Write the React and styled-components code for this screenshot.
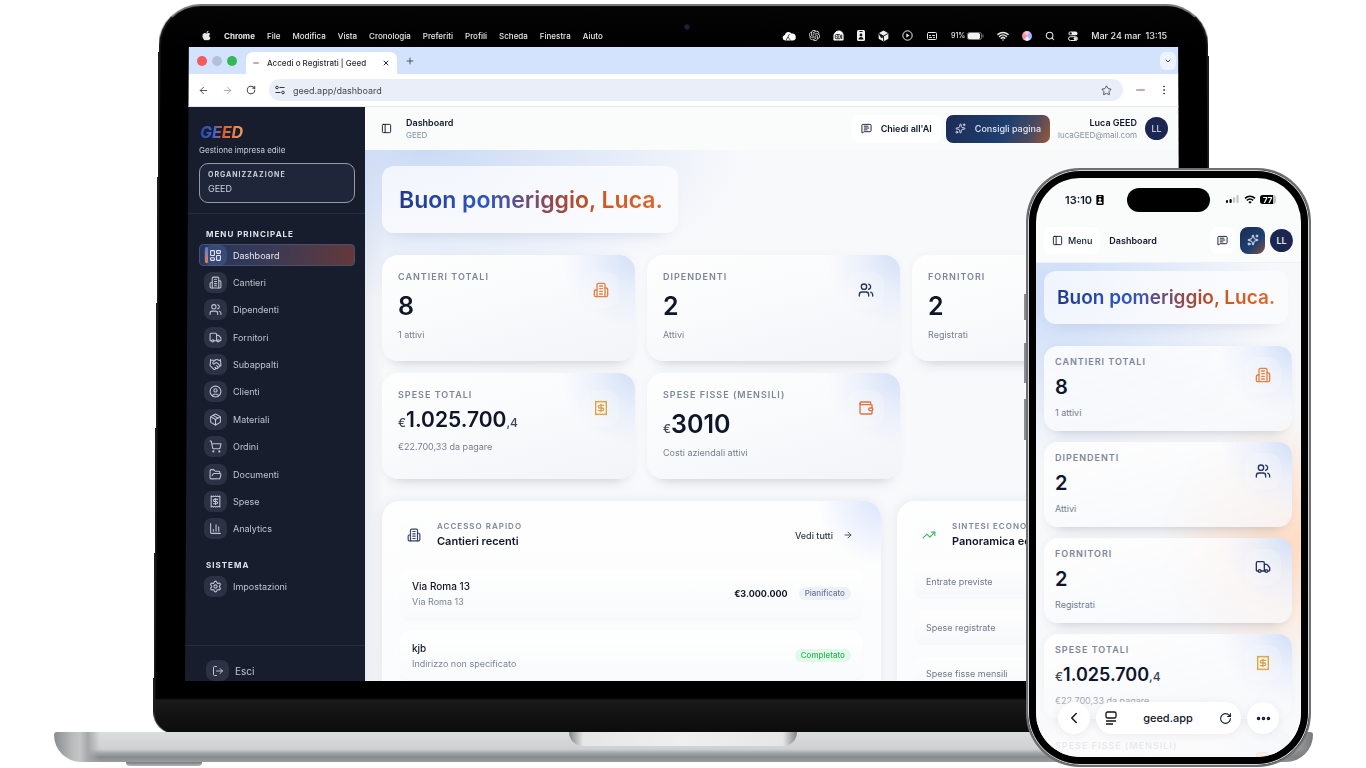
import styled, { createGlobalStyle, css } from "styled-components";
import {
  ArrowLeft,
  ArrowRight,
  Captions,
  ChartColumn,
  ChevronDown,
  ChevronLeft,
  CircleUser,
  Ellipsis,
  EllipsisVertical,
  FolderOpen,
  Handshake,
  LayoutDashboard,
  LogOut,
  MessageSquareText,
  Package,
  PanelLeft,
  Plus,
  Receipt,
  RotateCw,
  Search,
  Settings,
  ShoppingCart,
  Sparkles,
  Star,
  TrendingUp,
  Truck,
  Users,
  Wallet,
  Wifi,
  X,
} from "lucide-react";
import { FaApple } from "react-icons/fa";
import { SiOpenai } from "react-icons/si";

const GlobalStyle = createGlobalStyle`
  * {
    box-sizing: border-box;
  }
  body {
    margin: 0;
    background: #fff;
    font-family: Inter, "Liberation Sans", sans-serif;
    color: #10162a;
  }
  button, input {
    font: inherit;
    color: inherit;
    border: 0;
    padding: 0;
    background: none;
  }
  a {
    color: inherit;
    text-decoration: none;
  }
  h1, h2, p, ul {
    margin: 0;
    padding: 0;
  }
  ul {
    list-style: none;
  }
  svg {
    display: block;
    flex-shrink: 0;
  }
`;

const Stage = styled.div`
  position: relative;
  display: flex;
  flex-direction: column;
  height: 100vh;
  min-height: 600px;
  padding: 4px 53px 0 54px;
  overflow: hidden;
`;

/* ---------- laptop ---------- */

const Lid = styled.div`
  position: relative;
  z-index: 0;
  display: flex;
  flex-direction: column;
  flex: 1;
  min-height: 0;
  margin: 0 102px;
  padding: 20px 30px 51px 29px;

  /* the shell leans back a little, so it is narrower at the top */
  &::before {
    content: "";
    position: absolute;
    inset: -2px 0 0;
    z-index: -1;
    border: 2px solid #1c1c1d;
    border-top-color: #77787a;
    border-bottom: 0;
    border-radius: 42px 42px 22px 22px;
    background: linear-gradient(#050505 0, #000 40px, #000 calc(100% - 35px), #1a1a1a calc(100% - 34px), #0b0b0b 100%);
    transform: perspective(1500px) rotateX(1.3deg);
  }
`;

const Webcam = styled.i`
  position: absolute;
  top: 20px;
  left: 50%;
  width: 6px;
  height: 6px;
  border-radius: 50%;
  background: radial-gradient(#23284d, #0a0b14);
`;

const Base = styled.div`
  position: relative;
  display: flex;
  justify-content: center;
  height: 30px;
  border-radius: 3px 3px 28px 28px;
  background: linear-gradient(90deg, #8b8c8e, #b9babc 18px, #c4c5c7 26px, #a6a7a9 34px, rgba(200, 201, 203, 0) 46px, rgba(200, 201, 203, 0) calc(100% - 40px), #77797b 100%),
    linear-gradient(#dcdddd, #cfd0d1 17px, #a3a6a9 21px, #868a8e 25px, #9a9da0);
`;

const Lip = styled.div`
  width: 228px;
  height: 14px;
  margin-right: 1px;
  border-radius: 0 0 14px 14px;
  background: linear-gradient(90deg, #838486, #e6e6e7 14px, #efefef 50%, #e6e6e7 calc(100% - 14px), #838486);
`;

const Feet = styled.div`
  display: flex;
  justify-content: space-between;
  height: 6px;
  padding: 0 72px;

  &::before,
  &::after {
    content: "";
    width: 76px;
    height: 4px;
    border-radius: 0 0 24px 24px;
    background: linear-gradient(#77797c, #b5b7ba);
  }
`;

const Screen = styled.div`
  display: flex;
  flex-direction: column;
  flex: 1;
  min-height: 0;
  overflow: hidden;
  clip-path: polygon(4px 0, calc(100% - 3px) 0, 100% 100%, 0 100%);
`;

const MacBar = styled.nav`
  display: flex;
  align-items: center;
  gap: 12px;
  height: 23px;
  flex-shrink: 0;
  padding: 0 14px 0 16px;
  color: #e8e8e8;
  font-size: 8px;
  font-weight: 500;
`;

const MacMenu = styled.button`
  font-weight: ${(props) => (props.$app ? 700 : 500)};
`;

const MacStatus = styled.div`
  display: flex;
  align-items: center;
  gap: 13px;
  margin-left: auto;
`;

const MacBattery = styled.span`
  display: flex;
  align-items: center;
  gap: 2px;
  font-size: 7px;
`;

const Clock = styled.span`
  font-size: 9px;
`;

const Siri = styled.i`
  width: 10px;
  height: 10px;
  border-radius: 50%;
  background: conic-gradient(#ffd1ec, #b99bff, #6fd3ff, #fff, #ff7fa8, #ff9b8a, #ffd1ec);
`;

const TabStrip = styled.div`
  display: flex;
  align-items: flex-end;
  height: 27px;
  flex-shrink: 0;
  padding: 0 5px 0 12px;
  background: #d3e3fd;
`;

const Lights = styled.div`
  display: flex;
  align-items: center;
  gap: 5px;
  height: 27px;
  margin-right: 9px;
`;

const Light = styled.i`
  width: 10px;
  height: 10px;
  border-radius: 50%;
  background: ${(props) => props.$color};
`;

const Tab = styled.div`
  display: flex;
  align-items: center;
  gap: 8px;
  width: 151px;
  height: 22px;
  padding: 0 7px;
  border-radius: 7px 7px 0 0;
  background: #fff;
  color: #2a2d33;
  font-size: 8px;
  font-weight: 500;
  line-height: 18px;

  button {
    margin-left: auto;
  }
`;

const Favicon = styled.i`
  width: ${(props) => props.$size || 6}px;
  height: 2px;
  border-radius: 1px;
  background: linear-gradient(90deg, #9fb3e6, #f2a071);
`;

const StripButton = styled.button`
  display: grid;
  place-items: center;
  align-self: center;
  width: 16px;
  height: 18px;
  margin-left: ${(props) => (props.$last ? "auto" : "5px")};
  border-radius: 6px;
  background: ${(props) => (props.$last ? "#eef3fd" : "none")};
  color: #3a3d42;
`;

const Toolbar = styled.div`
  display: flex;
  align-items: center;
  gap: 13px;
  height: 33px;
  flex-shrink: 0;
  padding: 0 11px 0 13px;
  border-bottom: 1px solid #e6e8ec;
  background: #fff;
  color: #45484d;
`;

const Address = styled.label`
  display: flex;
  align-items: center;
  gap: 8px;
  flex: 1;
  height: 22px;
  padding: 0 11px 0 6px;
  border-radius: 11px;
  background: #e9eef8;
  font-size: 9px;

  input {
    flex: 1;
    min-width: 0;
    outline: 0;
  }
`;

const AppBody = styled.div`
  display: flex;
  flex: 1;
  min-height: 0;
`;

/* ---------- sidebar ---------- */

const Sidebar = styled.aside`
  display: flex;
  flex-direction: column;
  flex-shrink: 0;
  width: 180px;
  background: #181d2e;
  color: #ccd0da;
`;

const Brand = styled.div`
  margin-bottom: 15px;
  padding: 16px 10px 10px 14px;
  border-bottom: 1px solid #262c3f;
`;

const Logo = styled.svg`
  width: 46px;
  height: 18px;
  font-size: 16px;
  font-style: italic;
  font-weight: 700;
`;

const Tagline = styled.p`
  margin-top: 4px;
  font-size: 8px;
  line-height: 10px;
`;

const OrgButton = styled.button`
  display: flex;
  flex-direction: column;
  gap: 3px;
  width: 100%;
  height: 40px;
  margin-top: 8px;
  padding: 6px 8px;
  border: 1px solid #959aaa;
  border-radius: 9px;
  background: #20263a;
  text-align: left;
  font-size: 9px;
  line-height: 12px;
`;

const Caps = styled.span`
  font-size: 7px;
  line-height: 10px;
  font-weight: 700;
  letter-spacing: 1px;
`;

const MenuTitle = styled(Caps)`
  display: block;
  padding: 0 21px;
  font-size: 8px;
  color: #dfe2e9;
`;

const MenuList = styled.ul`
  display: flex;
  flex-direction: column;
  justify-content: space-between;
  height: ${(props) => props.$height || 22}px;
  margin: 5px 10px ${(props) => props.$after || 0}px 14px;
`;

const MenuLink = styled.a`
  display: flex;
  align-items: center;
  gap: 6px;
  height: 22px;
  padding-left: 4px;
  border: 1px solid transparent;
  border-radius: 4px;
  font-size: 9px;
  color: #bfc4d0;

  ${(props) =>
    props.$active &&
    css`
      position: relative;
      border-color: #47506f;
      background: linear-gradient(100deg, #24365f, #3a3a55 45%, #65393a);
      color: #e6e8ee;

      &::before {
        content: "";
        position: absolute;
        left: 5px;
        top: 2px;
        width: 3px;
        height: 16px;
        border-radius: 2px;
        background: linear-gradient(#5b7fd6, #f07d45);
      }
    `}
`;

const MenuIcon = styled.span`
  display: grid;
  place-items: center;
  width: 23px;
  height: 21px;
  border-radius: 8px;
  background: ${(props) => (props.$active ? "rgba(90, 120, 190, 0.3)" : "#2c3144")};
`;

const SideFoot = styled.div`
  margin-top: auto;
  height: 36px;
  padding: 14px 21px 0;
  border-top: 1px solid #262c3f;
`;

const Logout = styled.button`
  display: flex;
  align-items: center;
  gap: 6px;
  font-size: 10px;
  color: #bfc4d0;
`;

/* ---------- desktop page ---------- */

const Page = styled.main`
  display: flex;
  flex-direction: column;
  flex: 1;
  min-width: 0;
  overflow: hidden;
`;

const PageHeader = styled.header`
  display: flex;
  align-items: center;
  height: 43px;
  flex-shrink: 0;
  padding: 0 13px 0 16px;
  background: #fafbfb;
`;

const Crumb = styled.div`
  margin: 0 auto 0 14px;
  font-size: 9px;
  line-height: 12px;
  font-weight: 600;
`;

const Muted = styled.span`
  display: block;
  font-size: 8px;
  font-weight: 400;
  color: #8790a2;
`;

const HeaderButton = styled.button`
  display: flex;
  align-items: center;
  gap: 9px;
  height: 28px;
  padding: 0 9px;
  border-radius: 7px;
  background: #fff;
  font-size: 9px;
  font-weight: 600;

  ${(props) =>
    props.$dark &&
    css`
      background: linear-gradient(115deg, #1d2b55, #1e3f70 55%, #4c4a5e 80%, #b25d2c 105%);
      color: #dfe6f2;
      font-weight: 500;
      margin-left: 5px;
    `}
`;

const UserInfo = styled.div`
  margin: 0 8px;
  text-align: right;
  font-size: 9px;
  line-height: 12px;
  font-weight: 600;
`;

const Avatar = styled.span`
  display: grid;
  place-items: center;
  flex-shrink: 0;
  width: 23px;
  height: 23px;
  border-radius: 50%;
  background: #1b2750;
  color: #e2e6f0;
  font-size: 9px;
`;

const Content = styled.div`
  display: flex;
  flex-direction: column;
  flex: 1;
  min-height: 0;
  padding: 16px 16px 0 17px;
  overflow: hidden;
  background: radial-gradient(ellipse 320px 150px at 60px 0, #cbdaf5, rgba(203, 218, 245, 0)),
    radial-gradient(circle at 96% 62%, rgba(255, 225, 205, 0.7), rgba(255, 225, 205, 0) 110px),
    linear-gradient(90deg, #e9ecf1, #f8f9fb 20px);
`;

const Greeting = styled.h1`
  display: flex;
  align-items: center;
  width: 296px;
  height: 67px;
  margin-bottom: 22px;
  padding: 0 17px;
  border-radius: 12px;
  background: linear-gradient(90deg, rgba(255, 255, 255, 0.7), rgba(250, 251, 253, 0.9));
  box-shadow: 0 10px 16px -12px rgba(90, 110, 160, 0.25);
  font-size: 23px;
  font-weight: 600;
  white-space: nowrap;

  span {
    background: linear-gradient(90deg, #22398a, #2c55c4 32%, #a0483c 62%, #cc5522 75%, #e0682c);
    background-clip: text;
    color: transparent;
  }
`;

const Stats = styled.div`
  display: grid;
  grid-template-columns: repeat(3, minmax(0, 1fr));
  gap: 12px;
`;

const Stat = styled.section`
  display: flex;
  justify-content: space-between;
  height: 106px;
  padding: 17px 16px;
  border-radius: 16px;
  background: radial-gradient(circle at 100% 0, #d3e0f8, rgba(222, 231, 250, 0.6) 36px, rgba(255, 255, 255, 0) 74px),
    linear-gradient(165deg, #fefefe, #fafbfc 40%, #f3f4f8);
  box-shadow: 0 12px 14px -12px rgba(40, 50, 80, 0.25), 0 0 8px rgba(60, 70, 100, 0.04);
`;

const StatLabel = styled(Caps)`
  display: block;
  font-size: ${(props) => (props.$small ? 8 : 9)}px;
  font-weight: 600;
  color: #7d8699;
  white-space: nowrap;
`;

const StatValue = styled.p`
  margin-top: ${(props) => (props.$long ? 7 : 9)}px;
  font-size: ${(props) => (props.$long ? 21 : 25)}px;
  line-height: ${(props) => (props.$long ? 26 : 30)}px;
  font-weight: 600;
  white-space: nowrap;

  ${(props) =>
    props.$compact &&
    css`
      margin-top: 8px;
      font-size: ${props.$long ? 18 : 20}px;
      line-height: 24px;
    `}

  small {
    font-size: 12px;
    line-height: 1px;
    font-weight: 500;
    color: #3b4254;
  }
`;

const StatNote = styled.p`
  margin-top: 8px;
  font-size: 9px;
  line-height: 12px;
  color: #747d90;
`;

const StatIcon = styled.span`
  display: grid;
  place-items: center;
  width: 36px;
  height: 36px;
  border-radius: 12px;
  background: rgba(255, 255, 255, 0.2);
  color: ${(props) => props.$color};
`;

const Panels = styled.div`
  display: grid;
  grid-template-columns: minmax(0, 497fr) minmax(0, 267fr);
  gap: 16px;
  flex: 1;
  min-height: 0;
  margin-top: 22px;
`;

const Panel = styled.section`
  min-width: 0;
  padding: 20px 18px;
  border-radius: 18px 18px 0 0;
  background: radial-gradient(circle at 100% 0, #dbe5fb, rgba(255, 255, 255, 0) 64px), linear-gradient(#fefefe, #fafbfd);
  box-shadow: 0 0 12px rgba(50, 60, 90, 0.09);
`;

const PanelHead = styled.header`
  display: flex;
  align-items: center;
  gap: 9px;
  margin-bottom: ${(props) => props.$gap}px;
  white-space: nowrap;

  a {
    display: flex;
    align-items: center;
    gap: 10px;
    margin: 0 10px 0 auto;
    font-size: 9px;
    font-weight: 500;
    color: #32384a;
  }
`;

const PanelIcon = styled.span`
  display: grid;
  place-items: center;
  width: 28px;
  height: 28px;
  border-radius: 9px;
  background: #fcfdfd;
  color: ${(props) => props.$color};
`;

const PanelTitle = styled.h2`
  margin-top: 2px;
  font-size: 11px;
  line-height: 16px;
  font-weight: 600;
`;

const SiteRow = styled.li`
  display: flex;
  align-items: center;
  gap: 11px;
  height: 49px;
  margin-bottom: 13px;
  padding: 0 12px;
  border-radius: 10px;
  background: linear-gradient(#fff, #f9fafc);
  box-shadow: 0 4px 6px -4px rgba(60, 70, 100, 0.08);
  font-size: 10px;
  line-height: 15px;
  font-weight: 500;

  b {
    font-size: 9px;
    font-weight: 700;
  }
`;

const SiteName = styled.div`
  margin-right: auto;
`;

const SiteAddress = styled.span`
  display: block;
  font-size: 9px;
  font-weight: 400;
  color: #7a8397;
`;

const Badge = styled.span`
  padding: 0 6px;
  border-radius: 7px;
  background: ${(props) => (props.$done ? "#e0f9e8" : "#edf1f8")};
  color: ${(props) => (props.$done ? "#36b160" : "#6d7a96")};
  font-size: 8px;
  line-height: 13px;
`;

const SummaryRow = styled.li`
  height: 34px;
  margin-bottom: 12px;
  padding: 0 11px;
  border-radius: 8px;
  background: linear-gradient(#fefefe, #f7f8fb);
  font-size: 9px;
  line-height: 34px;
  color: #6e788e;
`;

/* ---------- phone ---------- */

const Phone = styled.div`
  position: absolute;
  top: 168px;
  right: 55px;
  bottom: 1px;
  width: 285px;
  padding: 8px;
  border: 2px solid #6e7073;
  border-radius: 54px;
  background: #000;
  box-shadow: inset 0 0 0 1px #d5d6d8;

  &::before {
    content: "";
    position: absolute;
    left: -4px;
    top: 124px;
    width: 2px;
    height: 146px;
    background: linear-gradient(#8c8d90 26px, transparent 26px, transparent 49px, #8c8d90 49px, #8c8d90 89px, transparent 89px, transparent 105px, #8c8d90 105px);
  }
`;

const PhoneScreen = styled.div`
  position: relative;
  display: flex;
  flex-direction: column;
  height: 100%;
  border-radius: 44px;
  overflow: hidden;
  background: #fafbfb;
`;

const StatusBar = styled.div`
  display: flex;
  align-items: center;
  height: 43px;
  flex-shrink: 0;
  padding: 0 24px 0 29px;
  font-size: 11px;
  font-weight: 600;

  > svg {
    margin-left: 4px;
  }
`;

const Island = styled.i`
  width: 83px;
  height: 24px;
  margin: 0 auto 0 23px;
  border-radius: 12px;
  background: #000;
`;

const PhoneHeader = styled.header`
  display: flex;
  align-items: center;
  gap: 5px;
  height: 42px;
  flex-shrink: 0;
  padding: 0 8px 3px 8px;
  border-bottom: 1px solid #eef1f6;
  font-size: 9px;
  font-weight: 600;
`;

const PhoneButton = styled.button`
  display: flex;
  align-items: center;
  justify-content: center;
  gap: 5px;
  min-width: 25px;
  height: 27px;
  padding: 0 ${(props) => (props.$wide ? 8 : 0)}px;
  border-radius: 8px;
  background: ${(props) => (props.$dark ? "linear-gradient(135deg, #1d2b55, #1e3f70 60%, #9b5632 110%)" : "#fff")};
  color: ${(props) => (props.$dark ? "#e8edf6" : "inherit")};
  font-weight: 500;
`;

const PhoneTitle = styled.span`
  margin: 0 auto 0 4px;
`;

const PhoneContent = styled.div`
  flex: 1;
  min-height: 0;
  overflow: hidden;
  padding: 8px 9px 0 8px;
  background: radial-gradient(ellipse 220px 170px at 20px 30px, #cbdcf8, rgba(203, 220, 248, 0)),
    radial-gradient(ellipse 140px 130px at 100% 280px, #ffdcc4, rgba(255, 220, 196, 0)), #f7f8fa;

  ${Greeting} {
    width: auto;
    height: 53px;
    margin: 0 4px 22px 0;
    padding: 0 13px;
    font-size: 19px;
  }
  ${Stats} {
    grid-template-columns: minmax(0, 1fr);
    gap: 11px;
  }
  ${Stat} {
    height: 85px;
    padding: 11px;
    border-radius: 14px;
    background: radial-gradient(circle at 100% 0, rgba(205, 220, 248, 0.9), rgba(222, 231, 250, 0.5) 36px, rgba(255, 255, 255, 0) 72px),
      linear-gradient(165deg, rgba(255, 255, 255, 0.8), rgba(246, 247, 250, 0.75));
  }
`;

const BrowserBar = styled.div`
  position: absolute;
  left: 0;
  right: 0;
  bottom: 0;
  display: flex;
  gap: 6px;
  height: 76px;
  padding: 21px 22px 0;
  background: linear-gradient(rgba(250, 250, 251, 0), rgba(250, 250, 251, 0.85) 45px);
`;

const RoundButton = styled.button`
  display: grid;
  place-items: center;
  width: 32px;
  height: 32px;
  border-radius: 50%;
  background: #fff;
  box-shadow: 0 1px 8px rgba(40, 50, 80, 0.08);
`;

const UrlPill = styled.div`
  display: flex;
  align-items: center;
  justify-content: space-between;
  flex: 1;
  height: 32px;
  padding: 0 9px;
  border-radius: 16px;
  background: #fff;
  box-shadow: 0 1px 8px rgba(40, 50, 80, 0.08);
  font-size: 11px;
  font-weight: 500;
`;

function Building({ size }) {
  return (
    <svg width={size} height={size} viewBox="0 0 24 24" fill="none" stroke="currentColor" strokeWidth="2" strokeLinecap="round" strokeLinejoin="round">
      <path d="M6 22V4a2 2 0 0 1 2-2h8a2 2 0 0 1 2 2v18Z" />
      <path d="M6 12H4a2 2 0 0 0-2 2v6a2 2 0 0 0 2 2h2" />
      <path d="M18 9h2a2 2 0 0 1 2 2v9a2 2 0 0 1-2 2h-2" />
      <path d="M10 6h4M10 10h4M10 14h4M10 18h4" />
    </svg>
  );
}

const menus = ["File", "Modifica", "Vista", "Cronologia", "Preferiti", "Profili", "Scheda", "Finestra", "Aiuto"];

const navItems = [
  { label: "Dashboard", icon: LayoutDashboard, active: true },
  { label: "Cantieri", icon: Building },
  { label: "Dipendenti", icon: Users },
  { label: "Fornitori", icon: Truck },
  { label: "Subappalti", icon: Handshake },
  { label: "Clienti", icon: CircleUser },
  { label: "Materiali", icon: Package },
  { label: "Ordini", icon: ShoppingCart },
  { label: "Documenti", icon: FolderOpen },
  { label: "Spese", icon: Receipt },
  { label: "Analytics", icon: ChartColumn },
];

const stats = [
  { label: "CANTIERI TOTALI", value: "8", note: "1 attivi", icon: Building, color: "#e8803f" },
  { label: "DIPENDENTI", value: "2", note: "Attivi", icon: Users, color: "#26335c" },
  { label: "FORNITORI", value: "2", note: "Registrati", icon: Truck, color: "#26335c" },
  {
    label: "SPESE TOTALI",
    currency: "€",
    value: "1.025.700",
    decimals: ",4",
    note: "€22.700,33 da pagare",
    icon: Receipt,
    color: "#dda43c",
  },
  {
    label: "SPESE FISSE (MENSILI)",
    currency: "€",
    value: "3010",
    note: "Costi aziendali attivi",
    icon: Wallet,
    color: "#e8703a",
  },
];

// the last card on the phone is only a teaser under the browser bar
const mobileStats = [...stats.slice(0, 4), { label: "SPESE FISSE (MENSILI)", icon: Wallet, color: "#e8703a" }];

function BadgeGlyph({ color, hole, height }) {
  return (
    <svg width="8" height={height} viewBox="0 0 8 11" aria-hidden="true">
      <rect width="8" height="11" rx="1.5" fill={color} />
      <rect x="2.5" y="1" width="3" height="1" fill={hole} />
      <circle cx="4" cy="5" r="1.4" fill={hole} />
      <path d="M1.6 9.4c0-3.2 4.8-3.2 4.8 0z" fill={hole} />
    </svg>
  );
}

function StatCard({ stat, compact }) {
  const Icon = stat.icon;
  return (
    <Stat>
      <div>
        <StatLabel>{stat.label}</StatLabel>
        {stat.value && (
          <StatValue $long={stat.decimals} $compact={compact}>
            {stat.currency && <small>{stat.currency}</small>}
            {stat.value}
            {stat.decimals && <small>{stat.decimals}</small>}
          </StatValue>
        )}
        {stat.note && <StatNote>{stat.note}</StatNote>}
      </div>
      <StatIcon $color={stat.color}>
        <Icon size={16} />
      </StatIcon>
    </Stat>
  );
}

function MenuBar() {
  return (
    <MacBar aria-label="macOS">
      <FaApple size={11} />
      <MacMenu $app>Chrome</MacMenu>
      {menus.map((menu) => (
        <MacMenu key={menu}>{menu}</MacMenu>
      ))}
      <MacStatus>
        <svg width="14" height="10" viewBox="0 0 14 10">
          <path d="M3.200 9.500a2.800 2.800 0 0 1-.4-5.500A3.800 3.800 0 0 1 9.600 2.600a3.500 3.500 0 0 1 1.300 6.900z" fill="#fff" />
          <path d="m4 9.500 3.500-6.500M8.500 9.500 6 6" stroke="#222" fill="none" strokeWidth=".8" />
        </svg>
        <SiOpenai size={11} />
        <svg width="11" height="11" viewBox="0 0 12 12" fill="none" stroke="#fff">
          <path d="M1 5.500C2 2.500 4 1 6.500 1S11 3 11 5.500V11H1z" fill="#fff" />
          <rect x="2.500" y="5" width="5.500" height="4.500" rx="1" stroke="#111" />
          <circle cx="5.200" cy="7.200" r="1" stroke="#111" />
          <path d="M9.500 5v5" stroke="#111" />
        </svg>
        <BadgeGlyph color="#f2f2f2" hole="#111" height="11" />
        <svg width="11" height="12" viewBox="0 0 12 13">
          <path d="M6 .5 11.300 3.500v6L6 12.500.700 9.500v-6z" fill="#f0f0f0" />
          <path d="M6 6.500 11 3.800M6 6.500v5.700M6 6.500 1 3.800l3 5z" fill="#111" stroke="#111" />
        </svg>
        <svg width="11" height="11" viewBox="0 0 11 11">
          <circle cx="5.500" cy="5.500" r="4.700" fill="none" stroke="#eee" />
          <path d="M4.300 3.500v4l3.200-2z" fill="#eee" />
        </svg>
        <Captions size={12} />
        <MacBattery>
          91%
          <svg width="17" height="8" viewBox="0 0 17 8">
            <rect x=".5" y=".5" width="14" height="7" rx="2" fill="none" stroke="#777" />
            <rect x="1" y="1" width="12" height="6" rx="1.500" fill="#f2f2f2" />
            <path d="M16 2.500v3" stroke="#777" />
          </svg>
        </MacBattery>
        <Wifi size={12} strokeWidth={3} />
        <Siri />
        <Search size={10} strokeWidth={2.5} />
        <svg width="10" height="10" viewBox="0 0 10 10">
          <rect x=".5" y=".5" width="9" height="3.800" rx="1.900" fill="#eee" />
          <circle cx="2.600" cy="2.400" r="1.200" fill="#111" />
          <rect x=".5" y="5.700" width="9" height="3.800" rx="1.900" fill="none" stroke="#eee" />
          <circle cx="7.300" cy="7.600" r="1.600" fill="#eee" />
        </svg>
        <Clock>Mar 24 mar&nbsp; 13:15</Clock>
      </MacStatus>
    </MacBar>
  );
}

function BrowserChrome() {
  return (
    <>
      <TabStrip>
        <Lights>
          <Light $color="#f25b5b" />
          <Light $color="#b3c0d8" />
          <Light $color="#35b957" />
        </Lights>
        <Tab>
          <Favicon />
          Accedi o Registrati | Geed
          <button aria-label="Chiudi scheda">
            <X size={8} strokeWidth={3} />
          </button>
        </Tab>
        <StripButton aria-label="Nuova scheda">
          <Plus size={10} />
        </StripButton>
        <StripButton $last aria-label="Cerca schede">
          <ChevronDown size={8} strokeWidth={3} />
        </StripButton>
      </TabStrip>
      <Toolbar>
        <button aria-label="Indietro">
          <ArrowLeft size={11} />
        </button>
        <button aria-label="Avanti">
          <ArrowRight size={11} color="#a5a8ad" />
        </button>
        <button aria-label="Ricarica">
          <RotateCw size={10} strokeWidth={2.5} />
        </button>
        <Address>
          <svg width="10" height="10" viewBox="0 0 10 10" fill="none" stroke="#33363b">
            <circle cx="2" cy="2.500" r="1.300" />
            <path d="M4.500 2.500h5M.5 7.500h5" />
            <circle cx="8" cy="7.500" r="1.300" />
          </svg>
          <input aria-label="Indirizzo" defaultValue="geed.app/dashboard" />
          <Star size={11} />
        </Address>
        <Favicon $size={9} />
        <button aria-label="Altro">
          <EllipsisVertical size={12} />
        </button>
      </Toolbar>
    </>
  );
}

function NavItem({ item }) {
  const Icon = item.icon;
  return (
    <li>
      <MenuLink href="#" $active={item.active}>
        <MenuIcon $active={item.active}>
          <Icon size={13} />
        </MenuIcon>
        {item.label}
      </MenuLink>
    </li>
  );
}

function SideMenu() {
  return (
    <Sidebar>
      <Brand>
        <Logo viewBox="0 0 46 18" role="img" aria-label="GEED">
          <defs>
            <linearGradient id="brand">
              <stop offset="0" stopColor="#2348b8" />
              <stop offset=".35" stopColor="#4866c8" />
              <stop offset=".5" stopColor="#d8572a" />
              <stop offset="1" stopColor="#f0a060" />
            </linearGradient>
          </defs>
          <text x="1" y="15" fill="url(#brand)">
            GEED
          </text>
        </Logo>
        <Tagline>Gestione impresa edile</Tagline>
        <OrgButton>
          <Caps>ORGANIZZAZIONE</Caps>
          GEED
        </OrgButton>
      </Brand>
      <MenuTitle>MENU PRINCIPALE</MenuTitle>
      <MenuList $height={296} $after={20}>
        {navItems.map((item) => (
          <NavItem key={item.label} item={item} />
        ))}
      </MenuList>
      <MenuTitle>SISTEMA</MenuTitle>
      <MenuList>
        <NavItem item={{ label: "Impostazioni", icon: Settings }} />
      </MenuList>
      <SideFoot>
        <Logout>
          <MenuIcon>
            <LogOut size={12} />
          </MenuIcon>
          Esci
        </Logout>
      </SideFoot>
    </Sidebar>
  );
}

function Desktop() {
  return (
    <Page>
      <PageHeader>
        <button aria-label="Barra laterale">
          <PanelLeft size={11} />
        </button>
        <Crumb>
          Dashboard
          <Muted>GEED</Muted>
        </Crumb>
        <HeaderButton>
          <MessageSquareText size={11} />
          Chiedi all'AI
        </HeaderButton>
        <HeaderButton $dark>
          <Sparkles size={11} />
          Consigli pagina
        </HeaderButton>
        <UserInfo>
          Luca GEED
          <Muted>lucaGEED@mail.com</Muted>
        </UserInfo>
        <Avatar>LL</Avatar>
      </PageHeader>
      <Content>
        <Greeting>
          <span>Buon pomeriggio, Luca.</span>
        </Greeting>
        <Stats>
          {stats.map((stat) => (
            <StatCard key={stat.label} stat={stat} />
          ))}
        </Stats>
        <Panels>
          <Panel>
            <PanelHead $gap={20}>
              <PanelIcon $color="#33406b">
                <Building size={14} />
              </PanelIcon>
              <div>
                <StatLabel $small>ACCESSO RAPIDO</StatLabel>
                <PanelTitle>Cantieri recenti</PanelTitle>
              </div>
              <a href="#">
                Vedi tutti
                <ArrowRight size={10} />
              </a>
            </PanelHead>
            <ul>
              <SiteRow>
                <SiteName>
                  Via Roma 13
                  <SiteAddress>Via Roma 13</SiteAddress>
                </SiteName>
                <b>€3.000.000</b>
                <Badge>Pianificato</Badge>
              </SiteRow>
              <SiteRow>
                <SiteName>
                  kjb
                  <SiteAddress>Indirizzo non specificato</SiteAddress>
                </SiteName>
                <Badge $done>Completato</Badge>
              </SiteRow>
            </ul>
          </Panel>
          <Panel>
            <PanelHead $gap={16}>
              <PanelIcon $color="#3fb56a">
                <TrendingUp size={14} />
              </PanelIcon>
              <div>
                <StatLabel $small>SINTESI ECONOMICA</StatLabel>
                <PanelTitle>Panoramica economica</PanelTitle>
              </div>
            </PanelHead>
            <ul>
              <SummaryRow>Entrate previste</SummaryRow>
              <SummaryRow>Spese registrate</SummaryRow>
              <SummaryRow>Spese fisse mensili</SummaryRow>
            </ul>
          </Panel>
        </Panels>
      </Content>
    </Page>
  );
}

function MobilePreview() {
  return (
    <Phone>
      <PhoneScreen>
        <StatusBar>
          13:10
          <BadgeGlyph color="#000" hole="#fff" height="10" />
          <Island />
          <svg width="51" height="11" viewBox="0 0 51 11">
            <rect x="0" y="6" width="2" height="3" rx="1" />
            <rect x="3.500" y="5" width="2.200" height="4" rx="1" />
            <rect x="7" y="3" width="2.200" height="6" rx="1" fill="#c6c7c9" />
            <rect x="10.500" y="1" width="2.200" height="8" rx="1" fill="#c6c7c9" />
            <path d="M19 4.300c3-2.700 7-2.700 10 0M20.800 6.400c2-1.700 4.400-1.700 6.400 0" fill="none" stroke="#000" strokeWidth="1.600" />
            <path d="M22.300 7.900c1-.8 2.400-.8 3.400 0L24 9.700z" />
            <rect x="34" y="1" width="16" height="9" rx="3" fill="#bfc0c2" />
            <path d="M37 1h10v9H37a3 3 0 0 1-3-3V4a3 3 0 0 1 3-3z" />
            <text x="37" y="8.500" fontSize="8" fontWeight="700" fill="#fff">
              77
            </text>
          </svg>
        </StatusBar>
        <PhoneHeader>
          <PhoneButton $wide>
            <PanelLeft size={11} />
            Menu
          </PhoneButton>
          <PhoneTitle>Dashboard</PhoneTitle>
          <PhoneButton aria-label="Chiedi all'AI">
            <MessageSquareText size={11} />
          </PhoneButton>
          <PhoneButton $dark aria-label="Consigli pagina">
            <Sparkles size={12} />
          </PhoneButton>
          <Avatar>LL</Avatar>
        </PhoneHeader>
        <PhoneContent>
          <Greeting as="h2">
            <span>Buon pomeriggio, Luca.</span>
          </Greeting>
          <Stats>
            {mobileStats.map((stat) => (
              <StatCard key={stat.label} stat={stat} compact />
            ))}
          </Stats>
        </PhoneContent>
        <BrowserBar>
          <RoundButton aria-label="Indietro">
            <ChevronLeft size={18} />
          </RoundButton>
          <UrlPill>
            <svg width="12" height="14" viewBox="0 0 12 14" fill="none" stroke="#111" strokeWidth="1.300">
              <rect x="1" y="1" width="10" height="6" rx="1.500" />
              <path d="M1 10h10M1 13h7" />
            </svg>
            geed.app
            <button aria-label="Ricarica">
              <RotateCw size={13} />
            </button>
          </UrlPill>
          <RoundButton aria-label="Altro">
            <Ellipsis size={17} strokeWidth={3} />
          </RoundButton>
        </BrowserBar>
      </PhoneScreen>
    </Phone>
  );
}

function App() {
  return (
    <>
      <GlobalStyle />
      <Stage>
        <Lid>
          <Webcam />
          <Screen>
            <MenuBar />
            <BrowserChrome />
            <AppBody>
              <SideMenu />
              <Desktop />
            </AppBody>
          </Screen>
        </Lid>
        <Base>
          <Lip />
        </Base>
        <Feet />
        <MobilePreview />
      </Stage>
    </>
  );
}
export default App;
